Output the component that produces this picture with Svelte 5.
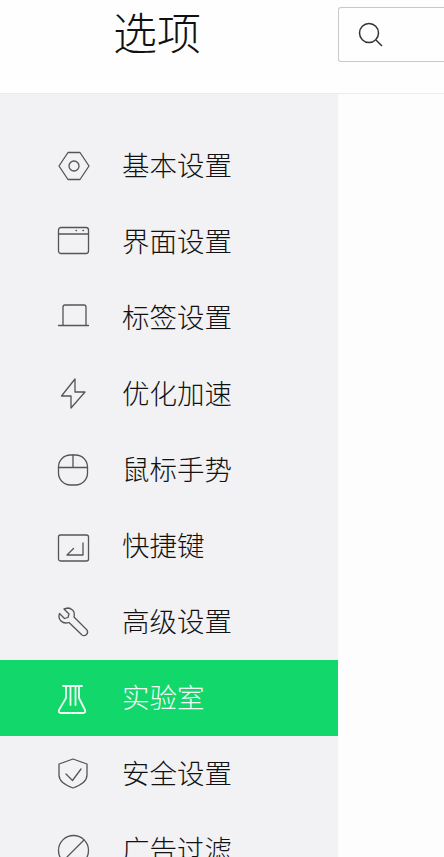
<script>
  const items = [
    { key: 'basic', label: '基本设置' },
    { key: 'ui', label: '界面设置' },
    { key: 'tab', label: '标签设置' },
    { key: 'speed', label: '优化加速' },
    { key: 'mouse', label: '鼠标手势' },
    { key: 'keys', label: '快捷键' },
    { key: 'advanced', label: '高级设置' },
    { key: 'lab', label: '实验室' },
    { key: 'safe', label: '安全设置' },
    { key: 'ads', label: '广告过滤' }
  ];
  let active = 'lab';
</script>

<div class="page">
  <header class="top">
    <h1 class="title">选项</h1>
    <div class="search">
      <svg width="26" height="26" viewBox="0 0 26 26" fill="none" stroke="#333" stroke-width="1.5">
        <circle cx="11" cy="11" r="9.5" />
        <path d="M18 18l6 6" />
      </svg>
    </div>
  </header>

  <div class="body">
    <nav class="side">
      {#each items as item}
        <div class="row" class:active={active === item.key}>
          <svg class="icon" width="33" height="32" viewBox="0 0 33 32" fill="none" stroke="currentColor" stroke-width="1.3" stroke-linejoin="round" stroke-linecap="round">
            {#if item.key === 'basic'}
              <path d="M11 2.500h12L32 16l-9 13.500H11L2 16z" />
              <circle cx="17" cy="16" r="5" />
            {:else if item.key === 'ui'}
              <rect x="1.500" y="1.500" width="30" height="26" rx="2.500" />
              <path d="M1.500 8h30M19 4.500h.5M26 4.500h.5" />
            {:else if item.key === 'tab'}
              <path d="M6 23V5q0-2 2-2h19q2 0 2 2v18M1.500 23.500h30" />
            {:else if item.key === 'speed'}
              <path d="M18 1L4.500 18H14v12L28 14H18z" />
            {:else if item.key === 'mouse'}
              <rect x="1.500" y="1" width="29" height="30" rx="12" />
              <path d="M1.500 13.500h29M16 1v12.500" />
            {:else if item.key === 'keys'}
              <rect x="1.500" y="5" width="30" height="26" rx="2" />
              <path d="M26 13v12H10M16.500 18.500L10 25" />
            {:else if item.key === 'advanced'}
              <path d="M11 2L7 3l5 5-1 3.500-3.500 1-5-5Q1 12 4 15q3 3 8 1.500L25 29q2.500 1.500 4.500-.5T30 24L17 11q1-5-1.500-7T11 2z" />
            {:else if item.key === 'lab'}
              <path d="M6 4h19M9 4v12L2 28q-1 3 2 3h22q3 0 2-3L22 16V4M13.500 5v18M18.500 5v18" stroke-width="1.800" />
            {:else if item.key === 'safe'}
              <path d="M16 1L2 6v11q0 8 14 13 14-5 14-13V6zM9 16l6.500 6.500L24 11" />
            {:else}
              <circle cx="16.500" cy="16.500" r="15" />
              <path d="M6 27L27 6" />
            {/if}
          </svg>
          <span class="label">{item.label}</span>
        </div>
      {/each}
    </nav>
    <main class="content"></main>
  </div>
</div>

<style>
  :global(body) {
    margin: 0;
    background: #fefdfe;
    overflow: hidden;
  }

  .page {
    width: 444px;
    height: 857px;
    overflow: hidden;
    font-family: "Noto Sans CJK SC", "Noto Sans", sans-serif;
    color: #111;
  }

  .top {
    display: flex;
    align-items: flex-start;
    height: 93px;
    border-bottom: 1px solid #ececee;
    background: #fefefe;
  }

  .title {
    margin: 0 0 0 113px;
    width: 225px;
    font-size: 44px;
    font-weight: 300;
    line-height: 62px;
    color: #111;
  }

  .search {
    display: flex;
    align-items: center;
    box-sizing: border-box;
    flex: 1;
    height: 55px;
    margin-top: 7px;
    padding-left: 19px;
    border: 1px solid #c9c9cb;
    border-right: 0;
    border-radius: 3px 0 0 3px;
  }

  .body {
    display: flex;
  }

  .side {
    width: 338px;
    flex-shrink: 0;
    padding-top: 34px;
    background: #f2f1f3;
  }

  .row {
    display: flex;
    align-items: center;
    gap: 32px;
    height: 76px;
    padding-left: 57px;
    color: #555;
  }

  .row.active {
    background: #12d76a;
    color: #eefcf4;
  }

  .icon {
    flex-shrink: 0;
  }

  .label {
    margin-bottom: 4px;
    font-size: 27.5px;
    font-weight: 300;
    line-height: 40px;
    color: #111;
  }

  .row.active .label {
    color: #f2fdf7;
  }

  .content {
    flex: 1;
  }
</style>
